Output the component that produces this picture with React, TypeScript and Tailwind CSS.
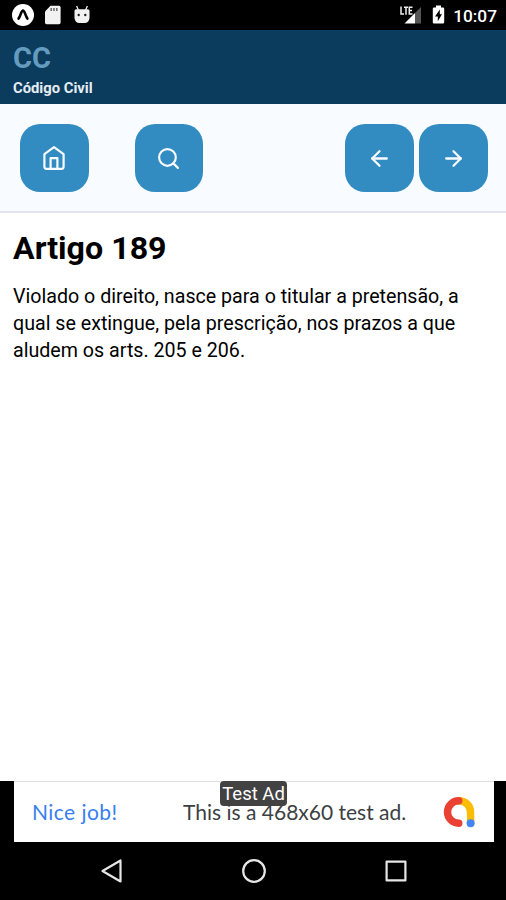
import type { ReactNode } from "react";
import { ArrowLeft, ArrowRight, Search } from "lucide-react";

function StatusBar() {
  return (
    <div className="flex h-[30px] shrink-0 items-center justify-between bg-black pl-3 pr-[9px] text-white">
      <div className="flex items-center">
        <svg width="22" height="22" viewBox="0 0 22 22">
          <circle cx="11" cy="11" r="11" fill="#fff" />
          <path d="M6.6 14.6 C8.6 11.8 9.2 6.6 11 6.6 C12.8 6.6 13.4 11.8 15.4 14.6" fill="none" stroke="#000" strokeWidth="2.6" strokeLinecap="round" />
        </svg>
        <svg className="ml-[11px]" width="16" height="20" viewBox="0 0 16 20">
          <path d="M5.5 0.8 H14 a1.6 1.6 0 0 1 1.6 1.6 V17.6 a1.6 1.6 0 0 1 -1.6 1.6 H1.6 A1.6 1.6 0 0 1 0 17.6 V6.5 Z" fill="#f2f2f2" />
          <path d="M6.2 3v3M9 3v3M11.8 3v3" stroke="#666" strokeWidth="1.5" />
        </svg>
        <svg className="ml-[13px]" width="16" height="20" viewBox="0 0 16 20">
          <path d="M2.6 1 L4.4 5 M13.4 1 L11.6 5" stroke="#eee" strokeWidth="1.3" />
          <path d="M0.5 5.8 Q0.6 4.2 2.2 4.2 H13.8 Q15.4 4.2 15.5 5.8 V13 Q15 18 10.5 18 H5.5 Q1 18 0.5 13 Z" fill="#f2f2f2" />
          <circle cx="4.7" cy="10" r="1.2" fill="#222" />
          <circle cx="11.3" cy="10" r="1.2" fill="#222" />
        </svg>
      </div>
      <div className="flex items-center">
        <svg width="22" height="20" viewBox="0 0 22 20">
          <path d="M21 2 V18.5 H15 V8 Z" fill="#555" />
          <path d="M15 8 V18.5 H4.5 Z" fill="#fff" />
          <path d="M1 1.5 V9 H4 M4 2.2 H8 M6 2.2 V9.7 M12.5 2.2 H9.3 V9 H12.5 M9.3 5.6 H12" fill="none" stroke="#eee" strokeWidth="1.5" />
        </svg>
        <svg className="ml-[10px]" width="13" height="19" viewBox="0 0 13 19">
          <path d="M4 0.5 H9 V2.5 H11 a1.2 1.2 0 0 1 1.2 1.2 V17.3 a1.2 1.2 0 0 1 -1.2 1.2 H2 A1.2 1.2 0 0 1 0.8 17.3 V3.7 A1.2 1.2 0 0 1 2 2.5 H4 Z" fill="#fff" />
          <path d="M7.8 4.6 L3 11.4 H5.8 V16.2 L10 9.2 H7.8 Z" fill="#000" />
        </svg>
        <span className="ml-2 mt-[3px] text-[17.3px] font-medium leading-none">10:07</span>
      </div>
    </div>
  );
}

function Header() {
  return (
    <header className="h-[74px] shrink-0 bg-[#0b3c5d] px-[13px] pt-[11px]">
      <h1 className="text-[29px] font-bold leading-[35px] text-[#649bbf]">CC</h1>
      <p className="mt-1 text-[14.8px] font-bold leading-[17px] text-[#e6ecf3]">Código Civil</p>
    </header>
  );
}

function ToolButton({ label, children }: { label: string; children: ReactNode }) {
  return (
    <button
      aria-label={label}
      className="flex h-[68.5px] w-[68.5px] shrink-0 items-center justify-center rounded-[20px] bg-[#328cc1] text-[#f8fbff]"
    >
      {children}
    </button>
  );
}

function Toolbar() {
  return (
    <nav className="flex h-[109px] shrink-0 items-center justify-between border-b-2 border-[#e2e3f1] bg-[#f8fbff] pt-px pl-5 pr-[18.5px]">
      <div className="flex gap-[46px]">
        <ToolButton label="Início">
          <svg width="24" height="26" viewBox="0 0 24 26" fill="none" stroke="currentColor" strokeWidth="2.2" strokeLinejoin="round">
            <path d="M2.4 9.2 L12 2.2 L21.6 9.2 V21.8 a2 2 0 0 1 -2 2 H4.4 a2 2 0 0 1 -2 -2 Z" />
            <path d="M8.6 23.8 V13.2 H15.4 V23.8" />
          </svg>
        </ToolButton>
        <ToolButton label="Pesquisar">
          <Search size={25} strokeWidth={2.1} />
        </ToolButton>
      </div>
      <div className="flex gap-[5.5px]">
        <ToolButton label="Anterior">
          <ArrowLeft size={25} strokeWidth={2.2} />
        </ToolButton>
        <ToolButton label="Próximo">
          <ArrowRight size={25} strokeWidth={2.2} />
        </ToolButton>
      </div>
    </nav>
  );
}

function Article() {
  return (
    <main className="flex-1 bg-white px-[13px] pt-4 text-black">
      <h2 className="text-[32.2px] font-bold leading-[38px]">Artigo 189</h2>
      <p className="mt-4 whitespace-nowrap text-[19.65px] leading-[27px]">
        Violado o direito, nasce para o titular a pretensão, a
        <br />
        qual se extingue, pela prescrição, nos prazos a que
        <br />
        aludem os arts. 205 e 206.
      </p>
    </main>
  );
}

function AdBanner() {
  return (
    <div className="h-[61px] shrink-0 bg-black pl-[14px] pr-[12px]">
      <div className="relative flex h-full items-center border-t border-[#dedede] bg-white pl-[18px] font-['Lato',sans-serif] text-[21px]">
        <span className="w-[151px] whitespace-nowrap tracking-[0.45px] text-[#3880ee]">Nice job!</span>
        <span className="w-[260px] whitespace-nowrap text-[#3c4043]">This is a 468x60 test ad.</span>
        <svg width="34" height="32" viewBox="0 0 34 32" fill="none" strokeWidth="7.4" strokeLinecap="round">
          <path d="M15.5 4.7 C22.5 4.7 27.6 9.5 27.6 16.5 V27" stroke="#fbbc04" />
          <path d="M15.8 4.7 A11.3 11.3 0 1 0 15.8 27.3" stroke="#e94235" />
          <circle cx="27.6" cy="27.2" r="4" fill="#4285f4" />
        </svg>
        <div className="absolute left-[206px] top-[-1px] flex h-[25px] w-[67px] items-center justify-center rounded bg-[#424242] pt-0.5 font-['Roboto',sans-serif] text-[18.5px] text-white">
          Test Ad
        </div>
      </div>
    </div>
  );
}

function NavigationBar() {
  return (
    <div className="flex h-[58px] shrink-0 items-center justify-between bg-black pl-[100px] pr-[99px]">
      <svg width="23" height="26" viewBox="0 0 23 26" fill="none" stroke="#e6e6e6" strokeWidth="2.2" strokeLinejoin="round">
        <path d="M20.5 2.5 V23.5 L2.5 13 Z" />
      </svg>
      <svg width="26" height="26" viewBox="0 0 26 26" fill="none" stroke="#e6e6e6" strokeWidth="2.2">
        <circle cx="13" cy="13" r="10.8" />
      </svg>
      <svg width="22" height="22" viewBox="0 0 22 22" fill="none" stroke="#e6e6e6" strokeWidth="2.2" strokeLinejoin="round">
        <rect x="1.6" y="1.6" width="18.8" height="18.8" />
      </svg>
    </div>
  );
}

export default function App() {
  return (
    <div className="flex h-[900px] w-[506px] flex-col overflow-hidden font-['Roboto',sans-serif]">
      <StatusBar />
      <Header />
      <Toolbar />
      <Article />
      <AdBanner />
      <NavigationBar />
    </div>
  );
}
